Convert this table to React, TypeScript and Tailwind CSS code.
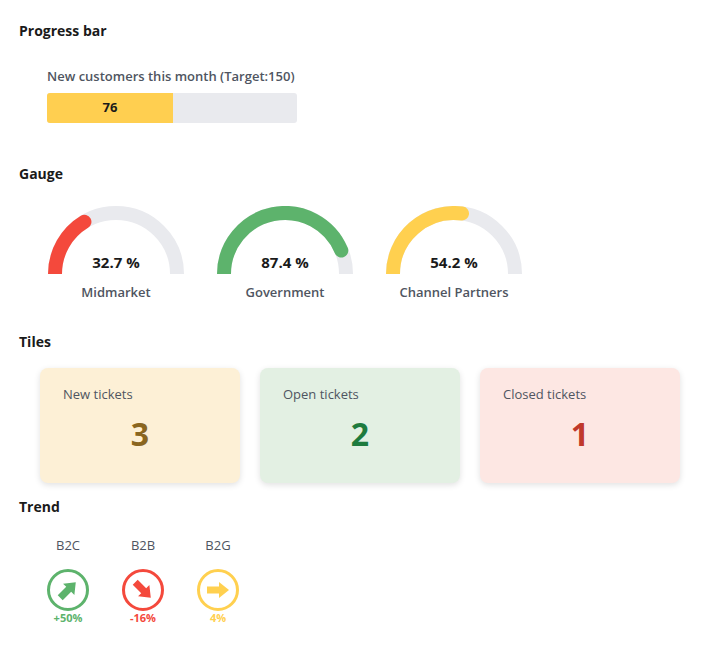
import React from 'react';

const gauges = [
  { label: 'Midmarket', value: 32.7, color: '#f4493c' },
  { label: 'Government', value: 87.4, color: '#5db36c' },
  { label: 'Channel Partners', value: 54.2, color: '#ffd04f' },
];

const tiles = [
  { label: 'New tickets', value: 3, bg: 'bg-[#fdf0d6]', fg: 'text-[#8a6620]' },
  { label: 'Open tickets', value: 2, bg: 'bg-[#e3f0e3]', fg: 'text-[#1e7b3e]' },
  { label: 'Closed tickets', value: 1, bg: 'bg-[#fde7e3]', fg: 'text-[#c0392b]' },
];

const trends = [
  { label: 'B2C', value: '+50%', color: '#5db36c', rotate: -45 },
  { label: 'B2B', value: '-16%', color: '#f4493c', rotate: 45 },
  { label: 'B2G', value: '4%', color: '#ffd04f', rotate: 0 },
];

const Gauge: React.FC<{ label: string; value: number; color: string }> = ({ label, value, color }) => {
  const cx = 68;
  const cy = 68;
  const r = 61;
  const a = Math.PI - (Math.PI * value) / 100;
  const ex = cx + r * Math.cos(a);
  const ey = cy - r * Math.sin(a);
  return (
    <div className="flex w-[136px] flex-col items-center">
      <div className="relative h-[68px] w-[136px]">
        <svg width="136" height="68" viewBox="0 0 136 68" className="overflow-hidden">
          <path d={`M ${cx - r} ${cy} A ${r} ${r} 0 0 1 ${cx + r} ${cy}`} fill="none" stroke="#e9eaee" strokeWidth="14" />
          <path
            d={`M ${cx - r} ${cy} A ${r} ${r} 0 0 1 ${ex} ${ey}`}
            fill="none"
            stroke={color}
            strokeWidth="14"
            strokeLinecap="round"
          />
        </svg>
        <div className="absolute bottom-[2px] left-0 right-0 text-center text-[15px] font-bold leading-5 text-[#1a1a1a]">
          {value} %
        </div>
      </div>
      <div className="mt-[8px] text-[13px] font-semibold leading-5 text-[#4f5561]">{label}</div>
    </div>
  );
};

const Arrow: React.FC<{ color: string; rotate: number }> = ({ color, rotate }) => (
  <svg width="24" height="24" viewBox="0 0 24 24" style={{ transform: `rotate(${rotate}deg)` }}>
    <path d="M1 8.5 H13 V4 L23 12 L13 20 V15.5 H1 Z" fill={color} />
  </svg>
);

export default function App() {
  return (
    <div className="min-h-screen bg-white px-[19px] pt-[21px] font-['Open_Sans',sans-serif] text-[#1a1a1a]">
      <h2 className="text-[14px] font-bold leading-5">Progress bar</h2>
      <div className="ml-[28px] mt-[25px] w-[250px]">
        <div className="text-[13px] font-semibold leading-5 text-[#4f5561]">New customers this month (Target:150)</div>
        <div className="mt-[7px] flex h-[30px] w-[250px] overflow-hidden rounded-[3px] bg-[#e9eaee]">
          <div className="flex h-full w-[126px] items-center justify-center bg-[#ffcf50] text-[13px] font-bold">76</div>
        </div>
      </div>

      <h2 className="mt-[41px] text-[14px] font-bold leading-5">Gauge</h2>
      <div className="ml-[29px] mt-[22px] flex gap-[33px]">
        {gauges.map((g) => (
          <Gauge key={g.label} {...g} />
        ))}
      </div>

      <h2 className="mt-[30px] text-[14px] font-bold leading-5">Tiles</h2>
      <div className="ml-[21px] mt-[16px] flex gap-[20px]">
        {tiles.map((t) => (
          <div
            key={t.label}
            className={`h-[115px] w-[200px] rounded-[8px] ${t.bg} px-[23px] pt-[16px] shadow-[0_2px_6px_rgba(0,0,0,0.12)]`}
          >
            <div className="text-[13px] leading-5 text-[#4f5561]">{t.label}</div>
            <div className={`mt-[10px] text-center text-[32px] font-bold leading-[40px] ${t.fg}`}>{t.value}</div>
          </div>
        ))}
      </div>

      <h2 className="mt-[14px] text-[14px] font-bold leading-5">Trend</h2>
      <div className="ml-[28px] mt-[19px] flex gap-[33px]">
        {trends.map((t) => (
          <div key={t.label} className="flex w-[42px] flex-col items-center">
            <div className="text-[13px] leading-[18px] text-[#4f5561]">{t.label}</div>
            <div
              className="mt-[15px] flex h-[42px] w-[42px] items-center justify-center rounded-full border-[3px]"
              style={{ borderColor: t.color }}
            >
              <Arrow color={t.color} rotate={t.rotate} />
            </div>
            <div className="text-[11px] font-bold leading-[14px]" style={{ color: t.color }}>
              {t.value}
            </div>
          </div>
        ))}
      </div>
    </div>
  );
}
